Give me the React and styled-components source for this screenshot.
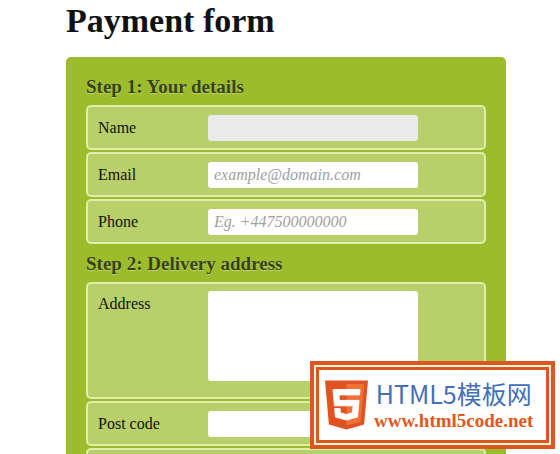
import React from 'react';
import styled, {createGlobalStyle} from 'styled-components';

const GlobalStyle = createGlobalStyle`
    * {
        box-sizing: border-box;
    }
    body {
        margin: 0;
        background-color: #fff;
        color: #111;
        font-family: "Liberation Serif", Georgia, serif;
    }
`;

const Page = styled.main`
    height: 100vh;
    overflow: hidden;
    padding: 0 54px 0 66px;
`;

const Title = styled.h1`
    margin: 0 0 15px;
    font-size: 34px;
    line-height: 42px;
`;

const Form = styled.form`
    max-width: 640px;
    padding: 20px;
    border-radius: 5px;
    background-color: #9cbc2c;
`;

const Step = styled.fieldset`
    min-width: 0;
    margin: 0 0 10px;
    padding: 0;
    border: none;
`;

const Legend = styled.legend`
    padding: 0 0 8px;
    color: #384313;
    font-size: 19px;
    font-weight: bold;
    line-height: 20px;
    text-shadow: 0 1px 1px #c0d576;
`;

const Fields = styled.ol`
    display: flex;
    flex-direction: column;
    gap: 2px;
    margin: 0;
    padding: 0;
    list-style: none;
`;

const Row = styled.li`
    display: flex;
    align-items: flex-start;
    padding: ${({$tall}) => $tall ? '7px 10px 16px' : '8px 10px 7px'};
    border: 2px solid #e0edac;
    border-radius: 5px;
    background-color: #b9cf6a;
`;

const Label = styled.label`
    flex: none;
    width: 110px;
    font-size: 16px;
    line-height: 25px;
`;

const Input = styled.input`
    width: 210px;
    height: 26px;
    padding: 0 6px;
    border: none;
    border-radius: 3px;
    outline: none;
    background-color: #fff;
    font: italic 16px "Liberation Serif", Georgia, serif;

    &::placeholder {
        color: #a0a0a0;
    }
    &:focus {
        background-color: #eaeaea;
    }
`;

const TextArea = styled(Input)`
    display: block;
    height: 90px;
    resize: none;
`;

const Badge = styled.a`
    position: fixed;
    right: 5px;
    bottom: 5px;
    padding: 2px;
    border: 4px solid #dc5620;
    background-color: #fdf3d6;
    text-decoration: none;
`;

const BadgeInner = styled.span`
    display: flex;
    align-items: center;
    gap: 6px;
    width: 233px;
    height: 76px;
    padding: 0 6px;
    border: 3px solid #dc5620;
    background-color: #fff;
`;

const Logo = styled.svg`
    flex: none;
    width: 43px;
    height: 50px;
`;

const BadgeText = styled.span`
    display: flex;
    flex-direction: column;
    align-items: center;
    white-space: nowrap;
`;

const SiteName = styled.span`
    color: #4470b8;
    font: 25px/32px "Noto Sans CJK SC", sans-serif;
`;

const SiteUrl = styled.span`
    color: #e2571c;
    font-size: 19px;
    font-weight: bold;
    line-height: 24px;
`;

const Html5Logo = () => (
    <Logo viewBox="30 0 451 512" aria-hidden="true">
        <path fill="#e0521f" d="M71 460 30 0h451l-41 460-185 52z"/>
        <path fill="#f0703a" d="m256 472 149-41 35-394H256z"/>
        <path
            fill="#fff"
            stroke="#fff"
            strokeWidth="10"
            d="M114 94h283l-5 56H176l5 58h206l-16 174-116 32-116-32-7-89h56l4 45 63 17 63-17 7-73H129z"
        />
    </Logo>
);

const Field = ({id, label, ...props}) => (
    <Row>
        <Label htmlFor={id}>{label}</Label>
        <Input id={id} name={id} {...props}/>
    </Row>
);

const App = () => (
    <>
        <GlobalStyle/>
        <Page>
            <Title>Payment form</Title>
            <Form>
                <Step>
                    <Legend>Step 1: Your details</Legend>
                    <Fields>
                        <Field id="name" label="Name" type="text" autoFocus/>
                        <Field id="email" label="Email" type="email" placeholder="example@domain.com"/>
                        <Field id="phone" label="Phone" type="tel" placeholder="Eg. +447500000000"/>
                    </Fields>
                </Step>
                <Step>
                    <Legend>Step 2: Delivery address</Legend>
                    <Fields>
                        <Row $tall>
                            <Label htmlFor="address">Address</Label>
                            <TextArea as="textarea" id="address" name="address"/>
                        </Row>
                        <Field id="postcode" label="Post code" type="text"/>
                        <Field id="country" type="text" aria-label="Country"/>
                    </Fields>
                </Step>
            </Form>
        </Page>
        <Badge href="#">
            <BadgeInner>
                <Html5Logo/>
                <BadgeText>
                    <SiteName>HTML5模板网</SiteName>
                    <SiteUrl>www.html5code.net</SiteUrl>
                </BadgeText>
            </BadgeInner>
        </Badge>
    </>
);

export default App;
